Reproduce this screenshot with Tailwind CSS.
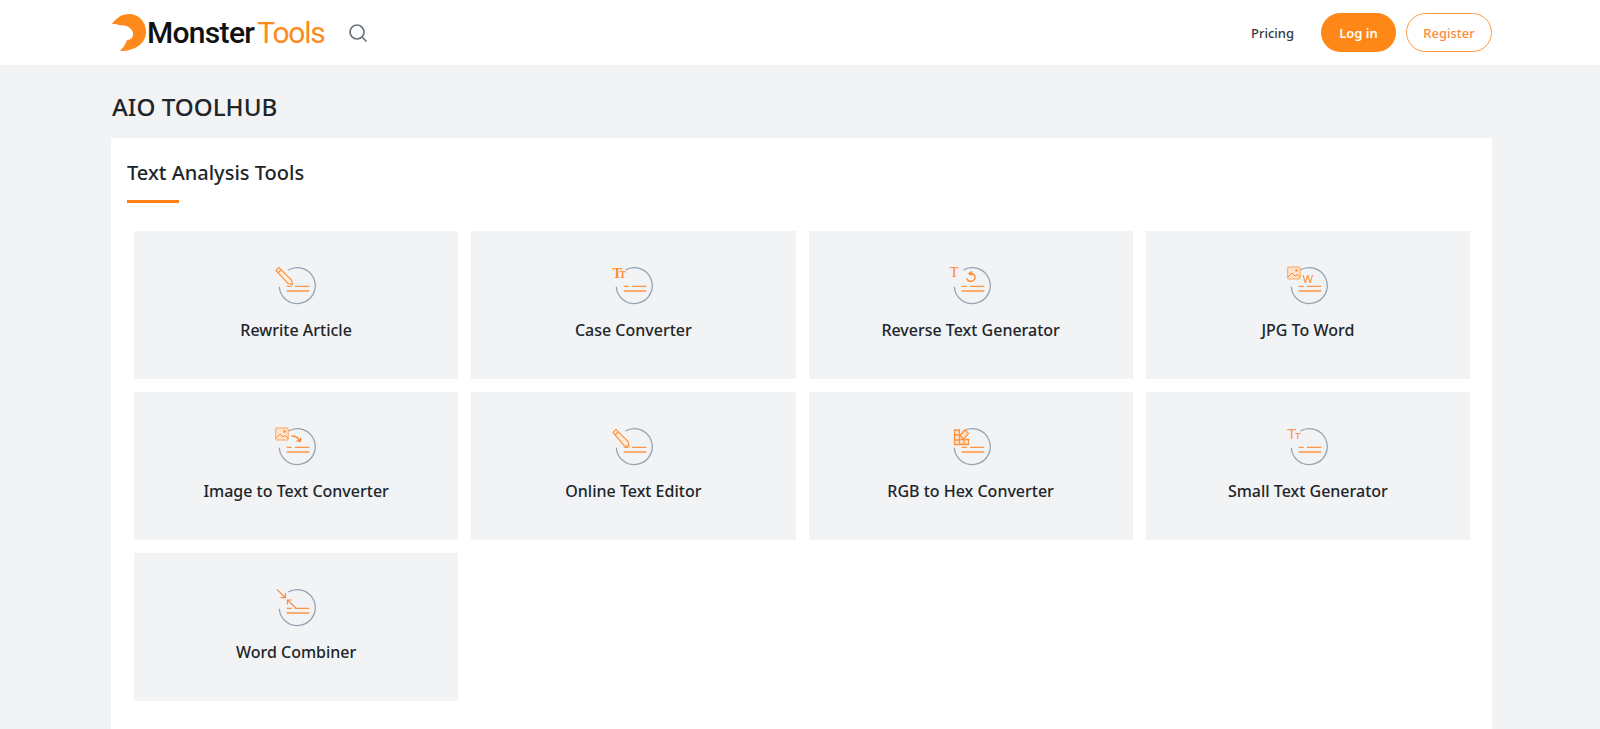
<!DOCTYPE html>
<html lang="en">
<head>
    <meta charset="UTF-8">
    <meta name="viewport" content="width=device-width, initial-scale=1.0">
    <title>AIO Toolhub - MonsterTools</title>
    <script src="https://cdn.jsdelivr.net/npm/@tailwindcss/browser@4"></script>
</head>
<body class="h-screen overflow-hidden bg-[#f1f3f5] font-['Noto_Sans',sans-serif] text-[#212529]">
    <!-- shared ring + lines for the tool icons -->
    <svg class="hidden">
        <symbol id="ring" viewBox="0 0 50 44">
            <path d="M17.3 8A18 18 0 1 1 8.300 24.700" fill="none" stroke="#97a3b3" stroke-width="1.300"/>
        </symbol>
        <symbol id="lines" viewBox="0 0 50 44">
            <path d="M15.700 24.400h5M24 24.400h14.300M15.700 29h22.600" fill="none" stroke="#ff9440" stroke-width="1.300"/>
        </symbol>
    </svg>

    <!-- Navigation -->
    <nav class="flex h-[65px] items-center justify-between bg-white pl-[112px] pr-[108px]">
        <div class="flex items-center">
            <a class="flex w-[213px] items-center" href="#">
                <svg class="h-[38px] w-[35px] shrink-0" viewBox="0 0 35 38">
                    <path d="M0 10C4 4 10 0 17 0C27 0 34 8 34 18C34 29 24 37 8 37C12 33 14 29 15 26C19 26 21.500 23 21 19C20 14 14 10.500 8 11.500C5 10 2.500 9.800 0 10Z" fill="#ff8a1c"/>
                    <path d="M12 15.500C16 14 20 16 20.500 20C19 18.500 16 17.500 12 15.500Z" fill="#fff"/>
                    <path d="M18 31C23 28 26 24 26 19" fill="none" stroke="#ff7a10" stroke-width="1"/>
                </svg>
                <span class="font-['Roboto',sans-serif] text-[30px] leading-none font-medium tracking-[-0.700px] text-[#111]">Monster</span>
                <span class="ml-[3px] font-['Roboto',sans-serif] text-[30px] leading-none tracking-[-1.200px] text-[#ff8a1c]">Tools</span>
            </a>
            <svg class="ml-[23px] h-[20px] w-[20px]" viewBox="0 0 20 20" fill="none" stroke="#6c757d" stroke-width="1.700">
                <circle cx="9" cy="9" r="7"/>
                <path d="M14 14l4.500 4.500"/>
            </svg>
        </div>
        <div class="flex items-center">
            <a class="pt-[2px] text-[13px] font-medium text-[#343a40]" href="#">Pricing</a>
            <a class="ml-[27px] flex h-[39px] w-[75px] items-center justify-center rounded-full bg-[#ff8717] pt-[3px] text-[13px] font-semibold text-white" href="#">Log in</a>
            <a class="ml-[10px] flex h-[39px] w-[86px] items-center justify-center rounded-full border border-[#ff9a45] pt-[3px] text-[13px] font-medium text-[#ff8a3c]" href="#">Register</a>
        </div>
    </nav>

    <!-- Main Content -->
    <main class="pl-[111px] pr-[108px]">
        <h1 class="ml-[1px] flex h-[73px] items-center pt-[11px] text-[24.200px] font-medium">AIO TOOLHUB</h1>
        <section class="h-[600px] bg-white pl-[23px] pr-[22px] pt-[20px]">
            <h2 class="-ml-[7px] text-[20px] leading-[30px] font-medium">Text Analysis Tools</h2>
            <div class="-ml-[7px] mt-[12px] h-[3px] w-[52px] bg-[#ff7f11]"></div>

            <div class="mt-[28px] grid grid-cols-4 gap-[13px]">
                <a class="flex h-[148px] flex-col items-center bg-[#f1f3f5] pt-[31px]" href="#">
                    <svg class="h-[44px] w-[50px]" viewBox="0 0 50 44">
                        <use href="#ring"/><use href="#lines"/>
                        <path d="M5 8.500l3-3 12.500 12.500 1 4.500-4.500-1zM7 11l3-3" fill="#ffeedd" stroke="#ff9440" stroke-width="1.200"/>
                    </svg>
                    <span class="mt-[12px] text-[16px] font-medium">Rewrite Article</span>
                </a>
                <a class="flex h-[148px] flex-col items-center bg-[#f1f3f5] pt-[31px]" href="#">
                    <svg class="h-[44px] w-[50px]" viewBox="0 0 50 44">
                        <use href="#ring"/><use href="#lines"/>
                        <text x="4.500" y="16" fill="#ff8a2b" font-family="Liberation Serif" font-size="14" font-weight="700">T</text>
                        <text x="11.500" y="16" fill="#ff8a2b" font-family="Liberation Serif" font-size="9.500" font-weight="700">T</text>
                    </svg>
                    <span class="mt-[12px] text-[16px] font-medium">Case Converter</span>
                </a>
                <a class="flex h-[148px] flex-col items-center bg-[#f1f3f5] pt-[31px]" href="#">
                    <svg class="h-[44px] w-[50px]" viewBox="0 0 50 44">
                        <use href="#ring"/><use href="#lines"/>
                        <text x="3.800" y="15" fill="#ff8a2b" font-family="Liberation Serif" font-size="14.500">T</text>
                        <path d="M26 9.500l-3 2 3 2M23.500 11.500c3-.5 5.500 1 5.500 3.700a4.300 4.300 0 0 1-8.300 1.300" fill="none" stroke="#ff8a2b" stroke-width="1.400"/>
                    </svg>
                    <span class="mt-[12px] text-[16px] font-medium">Reverse Text Generator</span>
                </a>
                <a class="flex h-[148px] flex-col items-center bg-[#f1f3f5] pt-[31px]" href="#">
                    <svg class="h-[44px] w-[50px]" viewBox="0 0 50 44">
                        <use href="#ring"/><use href="#lines"/>
                        <rect x="4.700" y="5" width="12.500" height="12" rx="1" fill="#ffe3cc" stroke="#ffa25c" stroke-width="1"/>
                        <path d="M5 15l4-4 3 3 2-1.500 3 2.500" fill="none" stroke="#ff8a2b" stroke-width="1"/>
                        <circle cx="13.500" cy="8.500" r="1.200" fill="#ff8a2b"/>
                        <text x="19.500" y="21" fill="#ff8a2b" font-family="Noto Sans" font-size="11.500">W</text>
                    </svg>
                    <span class="mt-[12px] text-[16px] font-medium">JPG To Word</span>
                </a>
                <a class="flex h-[148px] flex-col items-center bg-[#f1f3f5] pt-[31px]" href="#">
                    <svg class="h-[44px] w-[50px]" viewBox="0 0 50 44">
                        <use href="#ring"/><use href="#lines"/>
                        <rect x="4.700" y="5" width="12.500" height="12" rx="1" fill="#ffe3cc" stroke="#ffa25c" stroke-width="1"/>
                        <path d="M5 15l4-4 3 3 2-1.500 3 2.500" fill="none" stroke="#ff8a2b" stroke-width="1"/>
                        <circle cx="13.500" cy="8.500" r="1.200" fill="#ff8a2b"/>
                        <path d="M20.400 13.200c4-.5 7 1.500 8.800 5M29.800 14.800l-.6 3.800-3.600-1" fill="none" stroke="#ff7a1a" stroke-width="1.200"/>
                    </svg>
                    <span class="mt-[12px] text-[16px] font-medium">Image to Text Converter</span>
                </a>
                <a class="flex h-[148px] flex-col items-center bg-[#f1f3f5] pt-[31px]" href="#">
                    <svg class="h-[44px] w-[50px]" viewBox="0 0 50 44">
                        <use href="#ring"/>
                        <path d="M24 24.400h14.300M15.700 24.400h4.500M15.700 29h22.600" fill="none" stroke="#ff9440" stroke-width="1.300"/>
                        <path d="M5 9.500l3-3 12 12 1 5-5-1zM7 12l3-3" fill="#ffeedd" stroke="#ff9440" stroke-width="1.200"/>
                    </svg>
                    <span class="mt-[12px] text-[16px] font-medium">Online Text Editor</span>
                </a>
                <a class="flex h-[148px] flex-col items-center bg-[#f1f3f5] pt-[31px]" href="#">
                    <svg class="h-[44px] w-[50px]" viewBox="0 0 50 44">
                        <use href="#ring"/><use href="#lines"/>
                        <path d="M8.500 7h5v14.500h-5zM8.500 12h5M8.500 17h5M13.500 16.500h9v5h-9zM18 16.500v5M14 12.500l5-5.500 3.500 3.500-5 5.500z" fill="#ffe3cc" stroke="#ff9440" stroke-width="1.300"/>
                    </svg>
                    <span class="mt-[12px] text-[16px] font-medium">RGB to Hex Converter</span>
                </a>
                <a class="flex h-[148px] flex-col items-center bg-[#f1f3f5] pt-[31px]" href="#">
                    <svg class="h-[44px] w-[50px]" viewBox="0 0 50 44">
                        <use href="#ring"/><use href="#lines"/>
                        <text x="4" y="16" fill="#ff9a5c" font-family="Liberation Sans" font-size="15.500">T</text>
                        <text x="12" y="16" fill="#ff8a3c" font-family="Liberation Sans" font-size="9.500">T</text>
                    </svg>
                    <span class="mt-[12px] text-[16px] font-medium">Small Text Generator</span>
                </a>
                <a class="flex h-[148px] flex-col items-center bg-[#f1f3f5] pt-[31px]" href="#">
                    <svg class="h-[44px] w-[50px]" viewBox="0 0 50 44">
                        <use href="#ring"/><use href="#lines"/>
                        <path d="M6 5.400l8.400 8.300M14.400 9v4.700h-4.700M25.400 24.500l-9-8.500M16.400 20.500V16h4.500" fill="none" stroke="#ff8a4c" stroke-width="1.200"/>
                    </svg>
                    <span class="mt-[12px] text-[16px] font-medium">Word Combiner</span>
                </a>
            </div>
        </section>
    </main>
</body>
</html>
